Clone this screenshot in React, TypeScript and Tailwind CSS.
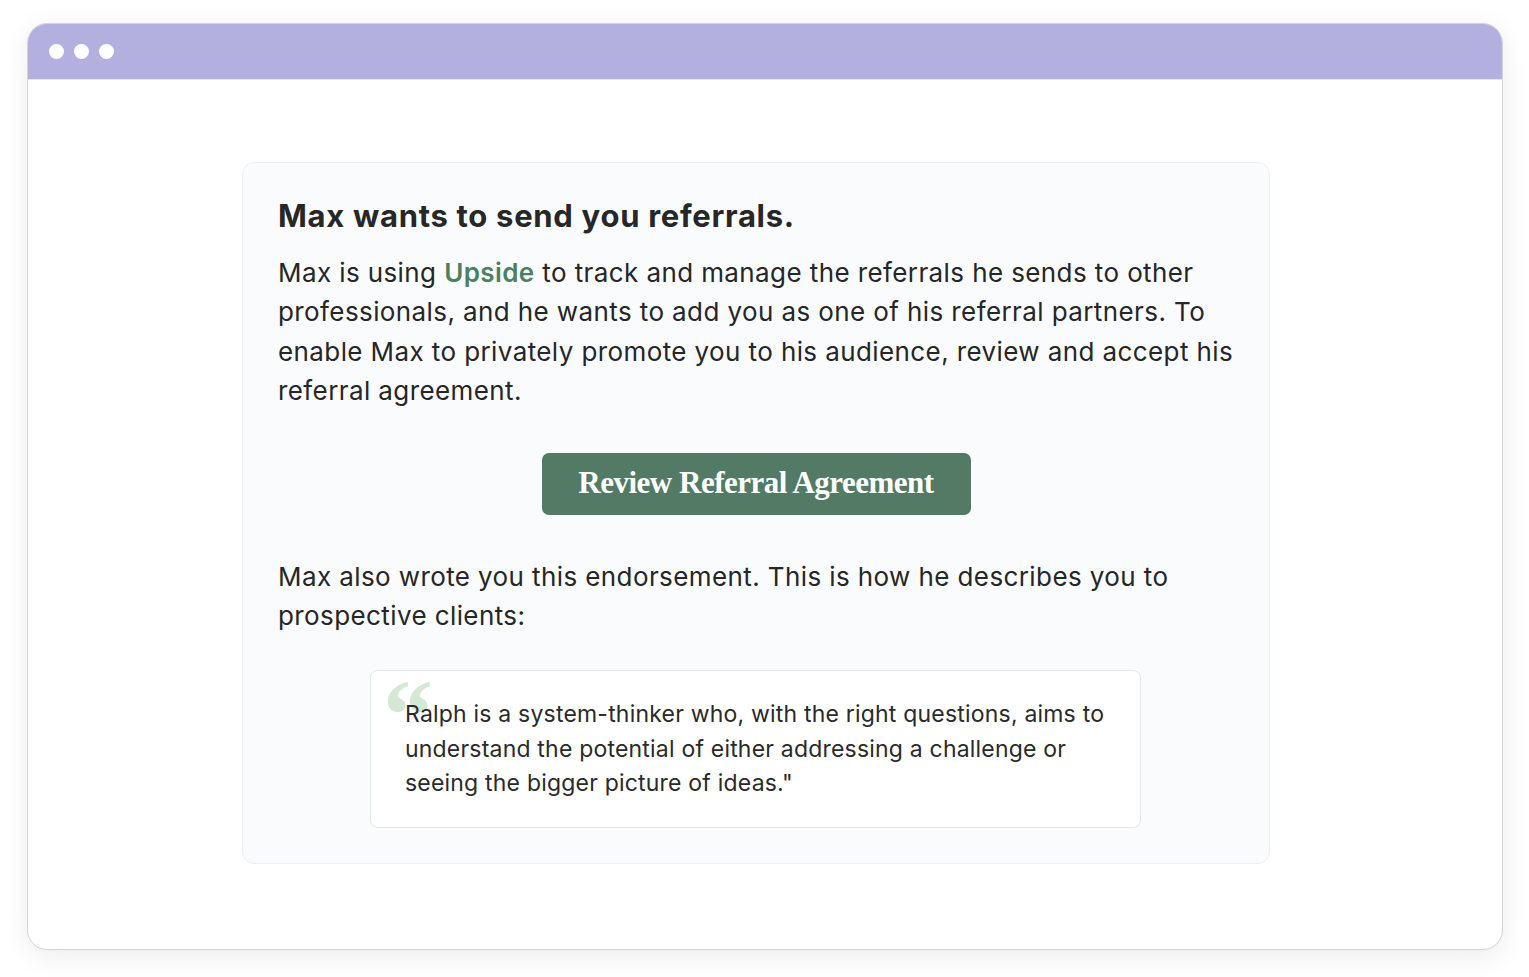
import React from 'react';

const sans = { fontFamily: 'Inter, "Noto Sans", sans-serif' };
const serif = { fontFamily: '"Liberation Serif", "DejaVu Serif", serif' };

const App = () => {
  return (
    <div className="min-h-screen w-full bg-white pt-[23px] pl-[27px]" style={sans}>
      <div id="window" className="flex h-[927px] w-[1476px] flex-col overflow-hidden rounded-[20px] border border-[#d4d4d4] bg-white shadow-[0_6px_28px_rgba(0,0,0,0.08)]">
        <div id="titlebar" className="flex h-[56px] shrink-0 items-center gap-[10px] border-b border-[#e4e2f4] bg-[#b3b0e0] pl-[21px]">
          <span className="h-[15px] w-[15px] rounded-full bg-white" />
          <span className="h-[15px] w-[15px] rounded-full bg-white" />
          <span className="h-[15px] w-[15px] rounded-full bg-white" />
        </div>

        <div className="pt-[82px] pl-[214px]">
          <div id="card" className="w-[1028px] rounded-[12px] border border-[#eceef1] bg-[#fafbfd] px-[35px] pt-[33px] pb-[35px] text-[#262626]">
            <h1 className="whitespace-nowrap text-[31px] font-bold leading-[40px] tracking-[0.7px] text-[#272727]">Max wants to send you referrals.</h1>
            <p className="mt-[17px] whitespace-nowrap text-[26px] leading-[39.4px] tracking-[0.4px]">
              Max is using <span className="font-semibold text-[#4c8060]">Upside</span> to track and manage the referrals he sends to other
              <br />
              professionals, and he wants to add you as one of his referral partners. To
              <br />
              enable Max to privately promote you to his audience, review and accept his
              <br />
              referral agreement.
            </p>

            <div className="mt-[42px] flex justify-center">
              <button className="h-[62px] w-[429px] whitespace-nowrap rounded-[7px] bg-[#537a64] text-[31px] font-bold tracking-[-0.5px] text-white" style={serif}>
                Review Referral Agreement
              </button>
            </div>

            <p className="mt-[42px] whitespace-nowrap text-[26px] leading-[39.4px] tracking-[0.4px]">
              Max also wrote you this endorsement. This is how he describes you to
              <br />
              prospective clients:
            </p>

            <div className="mt-[35px] flex justify-center pr-[1px]">
              <div id="quote" className="relative w-[771px] rounded-[8px] border border-[#e6e7ea] bg-white pl-[34px] pt-[26px] pb-[26px] text-[23px] leading-[34.5px] tracking-[0.2px] text-[#2a2a2a]">
                <span className="absolute left-[12px] top-[4px] h-[40px] text-[100px] font-bold leading-[80px] text-[#d3e8d5]" style={serif}>“</span>
                <p className="relative whitespace-nowrap">
                  Ralph is a system-thinker who, with the right questions, aims to
                  <br />
                  understand the potential of either addressing a challenge or
                  <br />
                  seeing the bigger picture of ideas."
                </p>
              </div>
            </div>
          </div>
        </div>
      </div>
    </div>
  );
};

export default App;
